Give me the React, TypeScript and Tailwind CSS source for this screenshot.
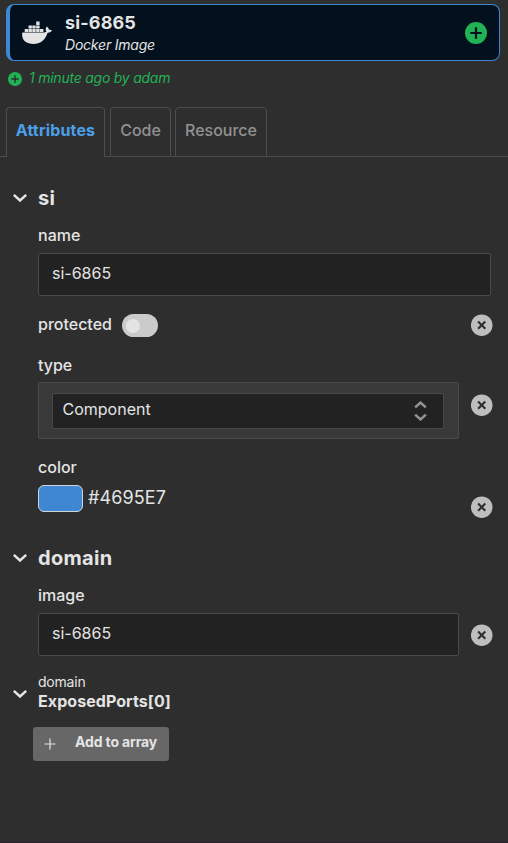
import React from "react";

const DockerWhale = () => (
  <svg viewBox="0 0 30 24" className="h-[24px] w-[30px] shrink-0" fill="#e4e4e4">
    <path d="M14.2.6h3.4v3.300h-3.400zM6.500 4.400h3.400v3.100H6.500zM10.300 4.400h3.400v3.100h-3.400zM14.200 4.400h3.400v3.100h-3.400zM2.700 7.900h3.400V11H2.700zM6.500 7.900h3.400V11H6.500zM10.300 7.900h3.400V11h-3.400zM14.200 7.900h3.400V11h-3.400zM18 7.900h3.400V11H18z" />
    <path d="M.7 11.500h20.600c1.200 0 2.400-.3 3.100-.8-1-1.600-.9-3.800.4-5.300 1.300.9 2 2 2.100 3.300 1.100-.2 2.300 0 3.100.6-.7 1.700-2.300 2.500-4.400 2.400C23 19.400 18.200 22.900 11.500 22.900 4.500 22.900.1 19.800.1 13.200.1 12.400.3 11.500.7 11.500z" />
  </svg>
);

const ClearButton = ({ className = "" }: { className?: string }) => (
  <button className={`h-[22px] w-[22px] shrink-0 ${className}`} aria-label="clear">
    <svg viewBox="0 0 22 22" className="block h-[22px] w-[22px]">
      <circle cx="10.7" cy="11.2" r="10.8" fill="#bebebe" />
      <path d="M7.1 7.6l7.200 7.200M14.300 7.600l-7.200 7.200" stroke="#2e2e2e" strokeWidth="2.1" />
    </svg>
  </button>
);

const PlusCircle = ({ className, mark }: { className: string; mark: string }) => (
  <svg viewBox="0 0 22 22" className={className}>
    <circle cx="11" cy="11" r="11" fill="#22b256" />
    <path d="M11 5.3v11.4M5.3 11h11.4" stroke={mark} strokeWidth="2.2" />
  </svg>
);

const Chevron = () => (
  <svg viewBox="0 0 14 8" className="h-[8px] w-[14px] shrink-0" fill="none">
    <path d="M.8.9L7 6.5 13.2.9" stroke="#e6e6e6" strokeWidth="2.5" />
  </svg>
);

const Heading = ({ children }: { children: React.ReactNode }) => (
  <div className="flex h-7 items-center gap-[11px] pl-[13px]">
    <Chevron />
    <h2 className="text-[20px] leading-7 font-bold tracking-[0.015em]">{children}</h2>
  </div>
);

const Label = ({ children }: { children: React.ReactNode }) => (
  <div className="h-6 text-[16px] leading-[22px] font-medium">{children}</div>
);

const ValueBox = ({ className, children }: { className: string; children: React.ReactNode }) => (
  <div
    className={`flex h-[43px] items-center rounded-[2px] border border-[#4a4a4a] bg-[#222222] pb-[3px] pl-[13px] text-[16px] ${className}`}
  >
    {children}
  </div>
);

export default function App() {
  return (
    <div className="flex h-[843px] w-[508px] flex-col overflow-hidden border-b-2 border-[#292729] bg-[#2e2e2e] pt-1 font-['Inter',sans-serif] text-[#e4e4e4]">
      <header className="mr-2 ml-[6px] flex h-[57px] shrink-0 items-center rounded-lg border border-l-4 border-[#3f87d2] bg-[#03101d] pr-3 pl-3">
        <DockerWhale />
        <div className="ml-[13px] flex-1">
          <div className="h-6 text-[18px] leading-6 font-bold tracking-[0.008em]">si-6865</div>
          <div className="h-5 text-[14px] leading-5 tracking-[-0.015em] italic">Docker Image</div>
        </div>
        <PlusCircle className="h-[22px] w-[22px]" mark="#03101d" />
      </header>

      <div className="flex h-[34px] shrink-0 items-center gap-[7px] pl-2 text-[14px] tracking-[-0.017em] text-[#22b256] italic">
        <PlusCircle className="mt-[2px] h-[14px] w-[14px]" mark="#2e2e2e" />
        <span className="mb-px">1 minute ago by adam</span>
      </div>

      <nav className="mt-3 flex h-[50px] shrink-0 text-[16px] font-medium text-[#929292]">
        <div className="w-[6px] border-b border-[#4d4d4d]" />
        <div className="flex w-[99px] items-center justify-center rounded-t-[4px] border border-b-0 border-[#4d4d4d] pb-[5px] font-bold tracking-[0.01em] text-[#4ba0e8]">
          Attributes
        </div>
        <div className="w-[5px] border-b border-[#4d4d4d]" />
        <div className="flex w-[61px] items-center justify-center rounded-t-[4px] border border-[#4d4d4d] pb-[4px]">
          Code
        </div>
        <div className="w-[4px] border-b border-[#4d4d4d]" />
        <div className="flex w-[92px] items-center justify-center rounded-t-[4px] border border-[#4d4d4d] pb-[4px]">
          Resource
        </div>
        <div className="flex-1 border-b border-[#4d4d4d]" />
      </nav>

      <main className="flex flex-col pt-[27px]">
        <Heading>si</Heading>
        <div className="mt-3 pl-[38px]">
          <Label>name</Label>
          <ValueBox className="mt-[5px] w-[453px]">si-6865</ValueBox>

          <div className="mt-[17px] flex h-6 items-center pr-[15px]">
            <Label>protected</Label>
            <div className="mt-px ml-[10px] flex h-[23px] w-[36px] items-center rounded-full bg-[#cbcbcb] pl-[4px]">
              <div className="h-[14px] w-[14px] rounded-full bg-[#e4e4e4]" />
            </div>
            <ClearButton className="ml-auto" />
          </div>

          <div className="mt-[17px]">
            <Label>type</Label>
          </div>
          <div className="mt-[4px] flex items-center gap-3">
            <div className="h-[57px] w-[421px] rounded-[2px] border border-[#4a4a4a] bg-[#393939] px-[13px] py-[10px]">
              <div className="flex h-[36px] w-[392px] items-center justify-between rounded-[2px] border border-[#4a4a4a] bg-[#222222] pr-[16px] pl-[9.5px]">
                <span className="pb-[4px] text-[16px]">Component</span>
                <svg viewBox="0 0 13 20" className="h-[20px] w-[13px]" fill="none">
                  <path d="M1.2 6.4L6.5 1.6l5.3 4.8M1.2 13.6l5.3 4.8 5.3-4.8" stroke="#929292" strokeWidth="2.6" />
                </svg>
              </div>
            </div>
            <ClearButton className="mb-[11px]" />
          </div>

          <div className="mt-[17px]">
            <Label>color</Label>
          </div>
          <div className="mt-[5px] flex h-[34px] pr-[15px]">
            <div className="h-[27px] w-[45px] rounded-[6px] border border-[#cfd4da] bg-[#3f87d2]" />
            <span className="ml-[5px] text-[18px] leading-[26px] tracking-[0.005em]">#4695E7</span>
            <ClearButton className="mt-[11px] ml-auto" />
          </div>
        </div>

        <div className="mt-[25px]">
          <Heading>domain</Heading>
        </div>
        <div className="mt-3 pl-[38px]">
          <Label>image</Label>
          <div className="mt-[5px] flex items-center gap-3">
            <ValueBox className="w-[421px]">si-6865</ValueBox>
            <ClearButton className="mt-px" />
          </div>
        </div>

        <div className="mt-[17px] flex items-center gap-[11px] pl-[13px]">
          <div className="mt-[3px]">
            <Chevron />
          </div>
          <div>
            <div className="h-[18px] text-[14px] leading-[18px] tracking-[-0.015em]">domain</div>
            <div className="h-[20px] text-[16px] leading-[20px] font-bold tracking-[0.004em]">ExposedPorts[0]</div>
          </div>
        </div>

        <button className="mt-4 ml-[33px] flex h-[34px] w-[136px] items-center rounded-[3px] bg-[#676767] pl-[11px] text-[14px] font-bold tracking-[-0.01em]">
          <svg viewBox="0 0 12 12" className="h-[12px] w-[12px]">
            <path d="M6 .5v11M.5 6h11" stroke="#e4e4e4" strokeWidth="1.2" />
          </svg>
          <span className="mb-[5px] ml-[19px]">Add to array</span>
        </button>
      </main>
    </div>
  );
}
